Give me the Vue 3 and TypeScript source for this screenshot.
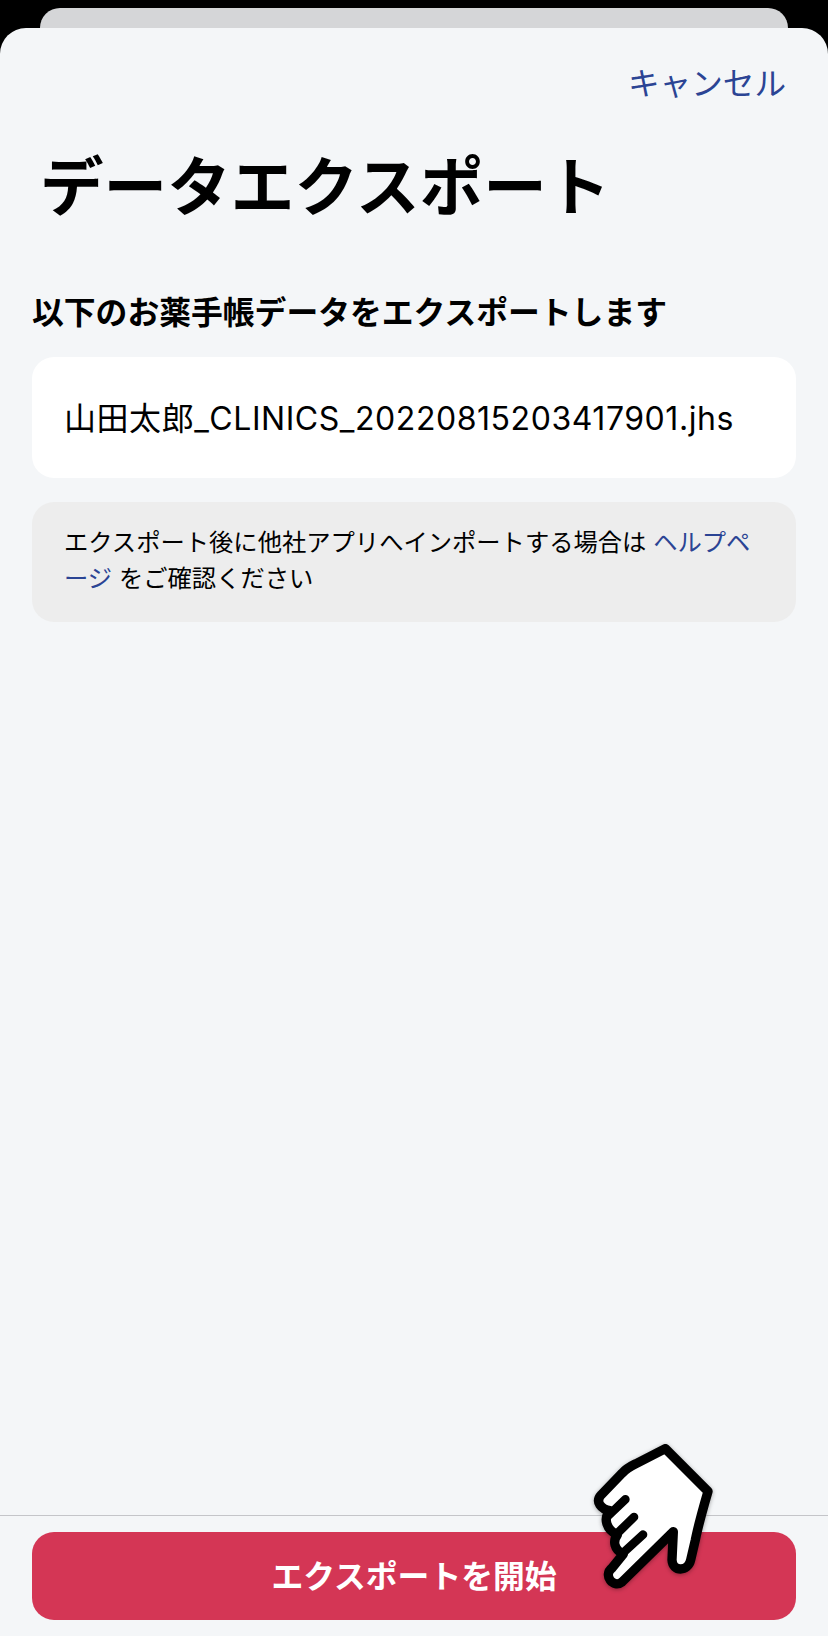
<script setup lang="ts">
const fileName = '山田太郎_CLINICS_20220815203417901.jhs'
</script>

<template>
  <div class="screen">
    <div class="back-card"></div>
    <div class="sheet">
      <main class="content">
        <div class="nav">
          <a class="cancel">キャンセル</a>
        </div>
        <h1 class="title">データエクスポート</h1>
        <h2 class="lead">以下のお薬手帳データをエクスポートします</h2>
        <div class="file-card">{{ fileName }}</div>
        <p class="note">
          エクスポート後に他社アプリへインポートする場合は <a class="link">ヘルプページ</a> をご確認ください
        </p>
      </main>
      <footer class="footer">
        <button class="export-btn">エクスポートを開始</button>
      </footer>
    </div>

    <!-- tap hint over the button -->
    <svg class="hand" viewBox="0 0 804 648" width="268" height="216">
      <path
        d="M316 86 L444 214 C430 262 416 310 406 360 L392 420 C384 456 338 456 336 420 L340 335 L186 486 C160 506 128 466 156 444 L190 402 C162 390 158 362 172 345 C140 330 128 296 150 272 C124 268 104 246 124 224 L186 160 C200 144 214 138 230 130 Z"
        fill="#fff"
        stroke="#000"
        stroke-width="28"
        stroke-linejoin="round"
      />
      <path
        d="M144 288 L196 238 M168 344 L222 291 M190 398 L249 344"
        fill="none"
        stroke="#000"
        stroke-width="26"
        stroke-linecap="round"
      />
    </svg>
  </div>
</template>

<style scoped>
.screen {
  position: relative;
  width: 828px;
  height: 1636px;
  display: flex;
  flex-direction: column;
  padding-top: 8px;
  box-sizing: border-box;
  background: #000;
  overflow: hidden;
  font-family: Inter, "Noto Sans CJK JP", sans-serif;
  color: #000;
}
.back-card {
  height: 20px;
  margin: 0 40px;
  flex: none;
  background: #d5d6d8;
  border-radius: 20px 20px 0 0;
}
.sheet {
  flex: 1;
  display: flex;
  flex-direction: column;
  background: #f4f6f8;
  border-radius: 26px 26px 0 0;
}
.content {
  flex: 1;
  padding: 0 32px;
}
.nav {
  display: flex;
  justify-content: flex-end;
  padding: 34px 10px 0 0;
}
.cancel {
  font-size: 31.6px;
  line-height: 44px;
  color: #2b4494;
}
.title {
  margin: 36px 0 0 8px;
  font-size: 63.6px;
  line-height: 90px;
  font-weight: 700;
}
.lead {
  margin: 59px 0 0;
  font-size: 31.8px;
  line-height: 44px;
  font-weight: 700;
}
.file-card {
  margin-top: 22px;
  height: 121px;
  padding: 0 32px 4px;
  box-sizing: border-box;
  display: flex;
  align-items: center;
  background: #fff;
  border-radius: 22px;
  font-size: 32px;
  letter-spacing: 0.55px;
}
.note {
  margin: 24px 0 0;
  height: 120px;
  padding: 22px 32px;
  box-sizing: border-box;
  background: #ededed;
  border-radius: 22px;
  font-size: 24.3px;
  line-height: 36px;
  line-break: anywhere;
}
.link {
  color: #2b4494;
}
.footer {
  flex: none;
  height: 121px;
  padding: 16px 32px 0;
  box-sizing: border-box;
  border-top: 1px solid #c4c5c9;
}
.export-btn {
  display: block;
  width: 100%;
  height: 88px;
  padding: 0 0 5px;
  border: 0;
  border-radius: 22px;
  background: #d43655;
  color: #fff;
  font-family: inherit;
  font-size: 31.8px;
  font-weight: 700;
}
.hand {
  position: absolute;
  left: 560px;
  top: 1420px;
  filter: drop-shadow(0 1px 2px rgba(0, 0, 0, 0.35));
}
</style>
